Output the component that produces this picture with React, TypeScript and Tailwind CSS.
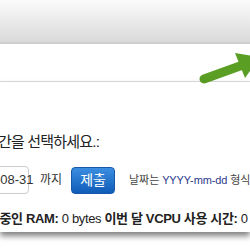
import React from 'react';

const font = { fontFamily: '"Liberation Sans", "Noto Sans CJK KR", sans-serif' };

// Green pointer arrow that overlaps the divider line
const Arrow: React.FC = () => (
  <svg className="absolute left-[190px] top-[40px]" width="60" height="50" viewBox="0 0 60 50">
    <line x1="14" y1="39" x2="50" y2="26" stroke="#5a9e24" strokeWidth="9" strokeLinecap="round" />
    <polygon points="45,13 70,17 55,38" fill="#5a9e24" />
  </svg>
);

const App: React.FC = () => {
  return (
    <div className="relative w-[250px] h-[250px] overflow-hidden bg-white" style={font}>
      {/* top bar */}
      <div className="h-[44px] bg-gradient-to-b from-[#fbfbfb] to-[#dadada] border-b-2 border-[#cfcfcf]" />
      <div className="h-[38px] border-b border-[#dddddd]" />
      <Arrow />

      <div className="relative h-[150px] flex flex-col shadow-[0_4px_6px_rgba(0,0,0,0.5)]">
        <div className="h-[49px] shrink-0" />
        <div className="h-[22px] shrink-0 flex items-center whitespace-nowrap -ml-[15px] text-[15px] tracking-[-0.8px] text-[#222]">
          기간을 선택하세요.:
        </div>

        <div className="h-[28px] shrink-0 mt-[13px] flex items-center whitespace-nowrap">
          <div className="shrink-0 flex items-center -ml-[40px] w-[69px] h-[28px] border border-[#cccccc] rounded-[4px] px-[6px] text-[13px] text-[#333]">
            2015-08-31
          </div>
          <span className="shrink-0 ml-[11px] text-[12px] text-[#333]">까지</span>
          <button className="shrink-0 ml-[9px] w-[44px] h-[27px] rounded-[4px] border border-[#1657a8] bg-gradient-to-b from-[#3a8ee0] to-[#0f5cb8] text-white text-[14px]">
            제출
          </button>
          <span className="shrink-0 ml-[14px] text-[11px] tracking-[-0.1px] text-[#444]">
            날짜는 <span className="text-[#2c3a8c]">YYYY-mm-dd</span> 형식으로
          </span>
        </div>

        <div className="h-[18px] shrink-0 mt-[16px] flex items-center whitespace-nowrap -ml-[27px] text-[13px] tracking-[-0.35px] text-[#222]">
          <b>사용 중인 RAM:</b>&nbsp;0 bytes&nbsp;<b>이번 달 VCPU 사용 시간:</b>&nbsp;0 시간
        </div>
      </div>
    </div>
  );
};

export default App;
